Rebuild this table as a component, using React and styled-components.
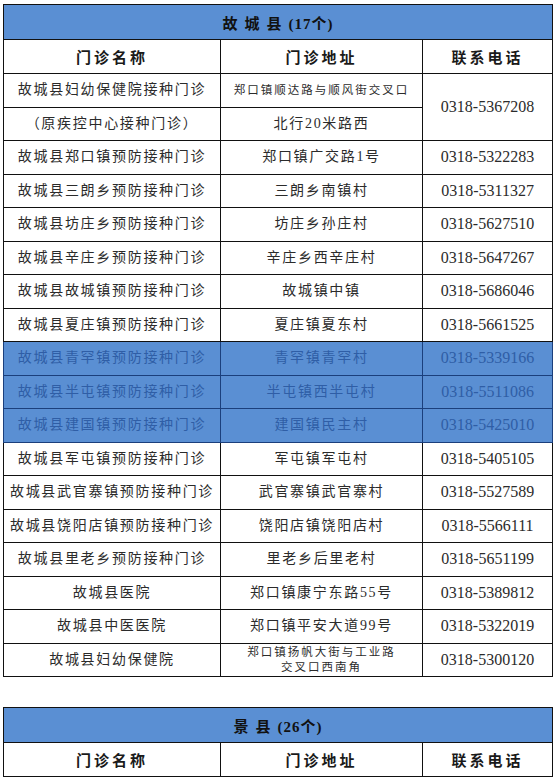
import React from 'react';
import styled, { createGlobalStyle } from 'styled-components';

const GlobalStyle = createGlobalStyle`
  html, body {
    margin: 0;
    padding: 0;
    background: #fff;
  }
  body {
    font-family: "Liberation Serif", "Noto Sans CJK SC", serif;
    color: #2b2b2b;
  }
`;

const Page = styled.div`
  display: flex;
  flex-direction: column;
  gap: 30px;
  padding: 4px 0 0 3px;
  width: 549px;
`;

const Table = styled.table`
  width: 549px;
  border-collapse: collapse;
  table-layout: fixed;
  border: 1px solid #111;
`;

const TitleCell = styled.th`
  height: 34px;
  padding: 0;
  background: #5a8fd3;
  border: 1px solid #111;
  font-size: 15px;
  font-weight: bold;
  color: #111;
  letter-spacing: 1px;
  text-align: center;
`;

const HeadCell = styled.th`
  height: 33px;
  padding: 0;
  border: 1px solid #111;
  font-size: 15px;
  font-weight: bold;
  color: #1a1a1a;
  letter-spacing: 3px;
  text-align: center;
`;

const Cell = styled.td`
  height: 32.5px;
  padding: 0;
  border: 1px solid ${p => (p.$masked ? '#1b3f7c' : '#111')};
  background: ${p => (p.$masked ? '#5a8fd3' : 'transparent')};
  color: ${p => (p.$masked ? '#2f5ea6' : '#2b2b2b')};
  font-size: ${p => (p.$small ? 11.5 : 14)}px;
  letter-spacing: ${p => (p.$small ? 2 : 1.7)}px;
  line-height: ${p => (p.$small ? 15 : 18)}px;
  text-align: center;
  vertical-align: middle;
  white-space: nowrap;
`;

const Phone = styled(Cell)`
  font-size: 16px;
  letter-spacing: 0;
`;

const Gap = styled.span`
  display: inline-block;
  width: 6px;
`;

const gucheng = [
  ['故城县郑口镇预防接种门诊', '郑口镇广交路1号', '0318-5322283'],
  ['故城县三朗乡预防接种门诊', '三朗乡南镇村', '0318-5311327'],
  ['故城县坊庄乡预防接种门诊', '坊庄乡孙庄村', '0318-5627510'],
  ['故城县辛庄乡预防接种门诊', '辛庄乡西辛庄村', '0318-5647267'],
  ['故城县故城镇预防接种门诊', '故城镇中镇', '0318-5686046'],
  ['故城县夏庄镇预防接种门诊', '夏庄镇夏东村', '0318-5661525'],
  ['故城县青罕镇预防接种门诊', '青罕镇青罕村', '0318-5339166', true],
  ['故城县半屯镇预防接种门诊', '半屯镇西半屯村', '0318-5511086', true],
  ['故城县建国镇预防接种门诊', '建国镇民主村', '0318-5425010', true],
  ['故城县军屯镇预防接种门诊', '军屯镇军屯村', '0318-5405105'],
  ['故城县武官寨镇预防接种门诊', '武官寨镇武官寨村', '0318-5527589'],
  ['故城县饶阳店镇预防接种门诊', '饶阳店镇饶阳店村', '0318-5566111'],
  ['故城县里老乡预防接种门诊', '里老乡后里老村', '0318-5651199'],
  ['故城县医院', '郑口镇康宁东路55号', '0318-5389812'],
  ['故城县中医医院', '郑口镇平安大道99号', '0318-5322019'],
];

const Cols = () => (
  <colgroup>
    <col style={{ width: 217 }} />
    <col style={{ width: 202 }} />
    <col style={{ width: 130 }} />
  </colgroup>
);

const HeadRow = () => (
  <tr>
    <HeadCell>门诊名称</HeadCell>
    <HeadCell>门诊地址</HeadCell>
    <HeadCell>联系电话</HeadCell>
  </tr>
);

const App = () => (
  <>
    <GlobalStyle />
    <Page>
      <Table>
        <Cols />
        <thead>
          <tr>
            <TitleCell colSpan={3}>
              故<Gap />城<Gap />县<Gap />(17个)
            </TitleCell>
          </tr>
          <HeadRow />
        </thead>
        <tbody>
          <tr>
            <Cell>故城县妇幼保健院接种门诊</Cell>
            <Cell $small>郑口镇顺达路与顺风街交叉口</Cell>
            <Phone rowSpan={2}>0318-5367208</Phone>
          </tr>
          <tr>
            <Cell>（原疾控中心接种门诊）</Cell>
            <Cell>北行20米路西</Cell>
          </tr>
          {gucheng.map(([name, addr, tel, masked]) => (
            <tr key={name}>
              <Cell $masked={masked}>{name}</Cell>
              <Cell $masked={masked}>{addr}</Cell>
              <Phone $masked={masked}>{tel}</Phone>
            </tr>
          ))}
          <tr>
            <Cell>故城县妇幼保健院</Cell>
            <Cell $small>
              郑口镇扬帆大街与工业路
              <br />
              交叉口西南角
            </Cell>
            <Phone>0318-5300120</Phone>
          </tr>
        </tbody>
      </Table>

      <Table>
        <Cols />
        <thead>
          <tr>
            <TitleCell colSpan={3}>
              景<Gap />县<Gap />(26个)
            </TitleCell>
          </tr>
          <HeadRow />
        </thead>
      </Table>
    </Page>
  </>
);

export default App;
